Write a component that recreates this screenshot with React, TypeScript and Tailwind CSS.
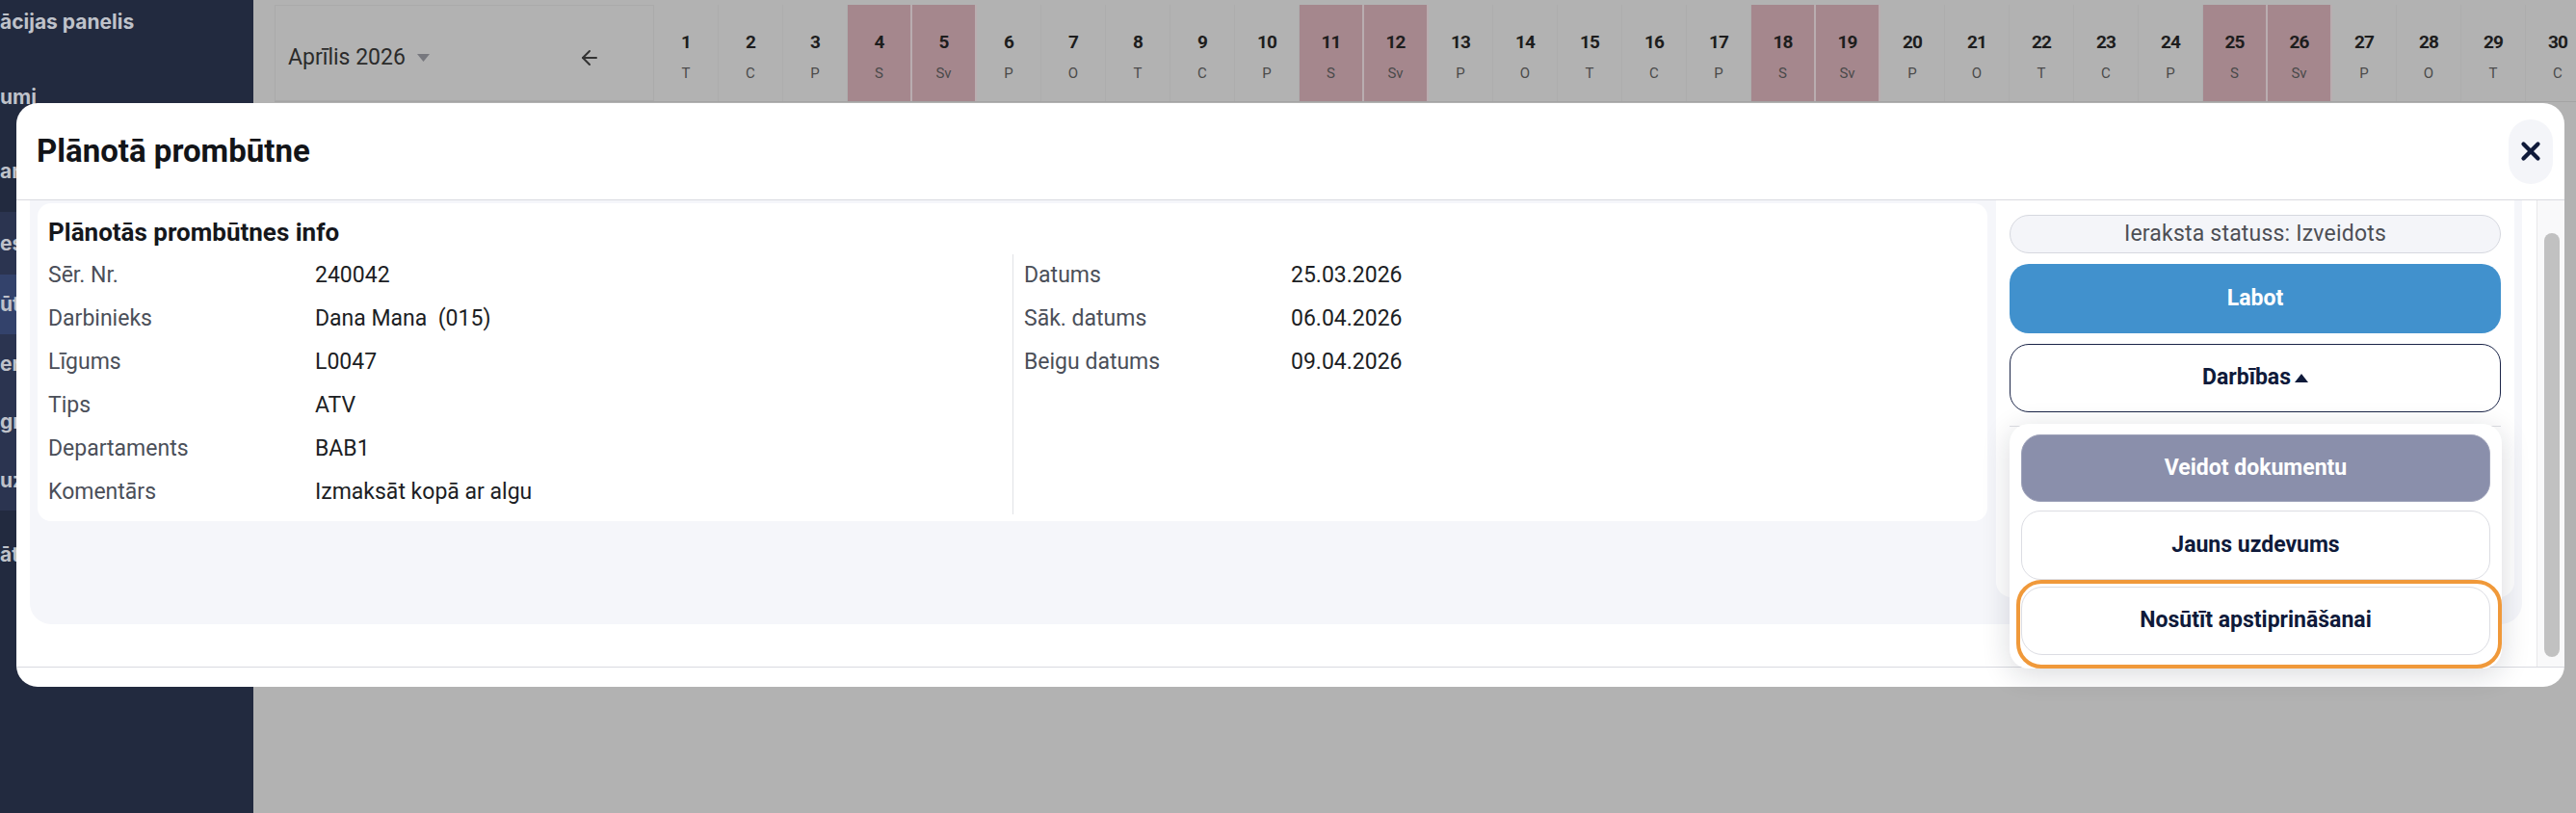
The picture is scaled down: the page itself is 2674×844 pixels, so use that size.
import React from 'react';
import { X, ArrowLeft } from 'lucide-react';

const weekdays = ['T', 'C', 'P', 'S', 'Sv', 'P', 'O'];
const days = Array.from({ length: 30 }, (_, i) => ({ day: i + 1, label: weekdays[i % 7] }));

const leftRows = [
  ['Sēr. Nr.', '240042'],
  ['Darbinieks', 'Dana Mana  (015)'],
  ['Līgums', 'L0047'],
  ['Tips', 'ATV'],
  ['Departaments', 'BAB1'],
  ['Komentārs', 'Izmaksāt kopā ar algu'],
];

const rightRows = [
  ['Datums', '25.03.2026'],
  ['Sāk. datums', '06.04.2026'],
  ['Beigu datums', '09.04.2026'],
];

// sidebar is scrolled sideways, only the word endings show
const Sidebar = () => (
  <aside className="w-[263px] shrink-0 overflow-hidden whitespace-nowrap bg-[#222a3f] font-[Inter,sans-serif] text-[21px] font-bold text-[#bfc2ca]">
    <div className="flex h-[46px] items-center">ācijas panelis</div>
    <div className="h-[16px]" />
    <div className="flex h-[77px] items-center">umi</div>
    <div className="flex h-[78px] items-center">ar</div>
    <div className="h-[3px]" />
    <div className="flex h-[65px] items-center bg-[#2b3450]">es</div>
    <div className="flex h-[62px] items-center bg-[#33426b]">ūt</div>
    <div className="bg-[#2b3450]">
      <div className="flex h-[62px] items-center">er</div>
      <div className="flex h-[58px] items-center">gr</div>
      <div className="flex h-[63px] items-center">uz</div>
    </div>
    <div className="flex h-[92px] items-center">āt</div>
  </aside>
);

const Calendar = () => (
  <main className="flex-1 overflow-hidden pl-[22px] pt-[5px] font-[Roboto,sans-serif]">
    <div className="flex border-b border-[#a4a4a4]">
      <div className="flex h-[100px] w-[394px] shrink-0 items-center justify-between border border-[#aaaaaa] pl-[13px] pr-[54px] pt-[10px]">
        <div className="flex items-center gap-[12px]">
          <span className="text-[23px] text-[#2b2b2b]">Aprīlis 2026</span>
          <svg width="13" height="8" viewBox="0 0 13 8">
            <path d="M0 0 L13 0 L6.5 8 Z" fill="#77787e" />
          </svg>
        </div>
        <ArrowLeft size={24} strokeWidth={2} className="text-[#333]" />
      </div>
      {days.map((d) => {
        const weekend = d.label === 'S' || d.label === 'Sv';
        return (
          <div
            key={d.day}
            className={
              weekend
                ? 'flex h-[100px] w-[67px] shrink-0 flex-col items-center border-r-2 border-[#b9adb0] bg-[#a5878d] pt-[29px]'
                : 'flex h-[100px] w-[67px] shrink-0 flex-col items-center border-r border-[#adadad] pt-[29px]'
            }
          >
            <span className="text-[19px] font-bold leading-[20px] tracking-[-0.8px] text-[#1d1d1d]">{d.day}</span>
            <span className="mt-[14px] text-[15px] leading-[16px] text-[#4a4a4a]">{d.label}</span>
          </div>
        );
      })}
    </div>
    <div className="mt-[2px] flex pl-[394px]">
      {days.map((d) => {
        const weekend = d.label === 'S' || d.label === 'Sv';
        return (
          <div
            key={d.day}
            className={
              weekend
                ? 'h-[60px] w-[67px] shrink-0 border-r-2 border-[#b9adb0] bg-[#a5878d]'
                : 'h-[60px] w-[67px] shrink-0 border-r border-[#adadad]'
            }
          />
        );
      })}
    </div>
  </main>
);

const InfoRow = ({ label, value }: { label: string; value: string }) => (
  <div className="flex h-[45px] items-center text-[23px]">
    <span className="w-[277px] shrink-0 text-[#4b4f59]">{label}</span>
    <span className="whitespace-pre text-[#1c1e24]">{value}</span>
  </div>
);

const ActionsCard = () => (
  <div className="relative h-[412px] w-[538px] shrink-0 rounded-b-[16px] bg-white px-[14px] pt-[15px]">
    <div className="flex h-[40px] items-center justify-center rounded-full border border-[#d6d8df] bg-[#f4f5f9] text-[23px] tracking-[0.2px] text-[#4d4f55]">
      Ieraksta statuss: Izveidots
    </div>
    <button className="mt-[11px] flex h-[72px] w-full items-center justify-center rounded-[20px] bg-[#4191cd] text-[23px] font-bold text-white">
      Labot
    </button>
    <button className="mt-[11px] flex h-[71px] w-full items-center justify-center gap-[4px] rounded-[20px] border border-[#1b2548] bg-white text-[23px] font-bold text-[#0f1a3a]">
      Darbības
      <svg width="14" height="9" viewBox="0 0 14 9">
        <path d="M0 9 L7 0 L14 9 Z" fill="#0f1a3a" />
      </svg>
    </button>
    <div className="mt-[14px] h-px bg-[#dedfe4]" />

    {/* dropdown */}
    <div className="absolute left-[14px] top-[232px] z-20 w-[511px] rounded-[20px] bg-white px-[12px] pt-[11px] shadow-[0_6px_30px_rgba(20,25,45,0.16)]">
      <button className="flex h-[70px] w-full items-center justify-center rounded-[20px] border border-[#9ea2b9] bg-[#8a8fab] text-[23px] font-bold text-white">
        Veidot dokumentu
      </button>
      <button className="mt-[9px] flex h-[72px] w-full items-center justify-center rounded-[20px] border border-[#dcdde3] bg-white text-[23px] font-bold text-[#0f1a3a]">
        Jauns uzdevums
      </button>
      <div className="-ml-[5px] h-[92px] w-[504px] rounded-[26px] border-[4px] border-[#f0993a] pl-px pt-[3px]">
        <button className="flex h-[71px] w-[487px] items-center justify-center rounded-[22px] border border-[#dcdde3] bg-white text-[23px] font-bold text-[#0f1a3a]">
          Nosūtīt apstiprināšanai
        </button>
      </div>
    </div>
  </div>
);

const Modal = () => (
  <div className="absolute left-[17px] top-[107px] z-10 flex h-[606px] w-[2645px] flex-col rounded-[22px] bg-white font-[Roboto,sans-serif]">
    <div className="flex h-[101px] shrink-0 items-center justify-between border-b border-[#d9dae0] pl-[21px] pr-[12px]">
      <h2 className="text-[33px] font-bold text-[#121418]">Plānotā prombūtne</h2>
      <button className="flex h-[67px] w-[46px] items-center justify-center rounded-full bg-[#f4f5f9]">
        <X size={30} strokeWidth={3.4} className="text-[#0f1a3a]" />
      </button>
    </div>

    <div className="flex h-[485px] shrink-0 border-b border-[#d9dae0]">
      <div className="flex-1 pl-[14px] pr-[15px]">
        <div className="flex h-[440px] gap-[9px] rounded-b-[22px] bg-[#f5f6fa] px-[8px]">
          <div className="mt-[3px] h-[330px] flex-1 rounded-[14px] bg-white px-[11px] pt-[15px]">
            <h3 className="text-[26px] font-bold leading-[30px] text-[#15171c]">Plānotās prombūtnes info</h3>
            <div className="mt-[8px] grid grid-cols-2">
              <div>
                {leftRows.map(([l, v]) => (
                  <InfoRow key={l} label={l} value={v} />
                ))}
              </div>
              <div className="border-l border-[#e1e2e6] pl-[11px]">
                {rightRows.map(([l, v]) => (
                  <InfoRow key={l} label={l} value={v} />
                ))}
              </div>
            </div>
          </div>
          <ActionsCard />
        </div>
      </div>
      <div className="w-[29px] shrink-0 border-l border-[#e8e8ea] bg-[#f9f9fa]">
        <div className="ml-[7px] mt-[34px] h-[440px] w-[16px] rounded-full bg-[#c1c1c1]" />
      </div>
    </div>
    <div className="flex-1" />
  </div>
);

export default function App() {
  return (
    <div className="relative flex h-[844px] w-[2674px] overflow-hidden bg-[#b2b2b2]">
      <Sidebar />
      <Calendar />
      <Modal />
    </div>
  );
}
